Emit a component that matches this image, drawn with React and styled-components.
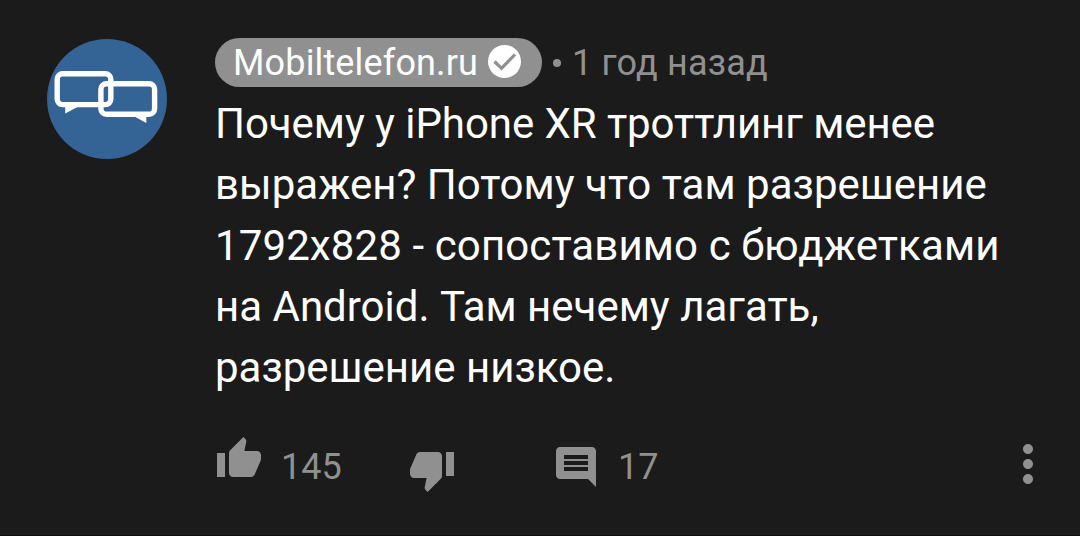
import React from "react";
import styled, { createGlobalStyle } from "styled-components";

const GlobalStyle = createGlobalStyle`
  * { box-sizing: border-box; }
  body {
    margin: 0;
    background: #1b1b1b;
    font-family: Roboto, "Liberation Sans", sans-serif;
  }
`;

const Comment = styled.article`
  display: flex;
  gap: 48px;
  width: 1080px;
  height: 536px;
  padding: 38px 22px 0 47px;
  background: #1b1b1b;
  border-bottom: 1px solid #120c0f;
`;

const Avatar = styled.svg`
  flex: none;
  width: 120px;
  height: 120px;
  margin-top: 1px;
`;

const Body = styled.div`
  flex: 1;
  min-width: 0;
`;

const Header = styled.header`
  display: flex;
  align-items: center;
  height: 49px;
`;

const AuthorPill = styled.div`
  display: flex;
  align-items: center;
  flex: none;
  width: 327px;
  height: 49px;
  padding-left: 18px;
  border-radius: 25px;
  background: #909090;
`;

const AuthorName = styled.span`
  width: 255px;
  font-size: 36px;
  line-height: 48px;
  letter-spacing: 0.15px;
  white-space: nowrap;
  color: #fff;
`;

const Badge = styled.svg`
  flex: none;
  width: 33px;
  height: 33px;
  margin-top: -2px;
`;

const Dot = styled.span`
  width: 8px;
  height: 8px;
  margin: 0 11px;
  border-radius: 50%;
  background: #909090;
`;

const Age = styled.span`
  font-size: 36px;
  line-height: 48px;
  letter-spacing: 0.2px;
  white-space: nowrap;
  color: #909090;
`;

const Text = styled.p`
  margin: 6px 0 0;
  font-size: 42px;
  line-height: 61px;
  color: #fff;
`;

const Line = styled.span`
  display: block;
  white-space: nowrap;
  letter-spacing: ${(p) => p.$spacing || 0}px;
`;

const Actions = styled.footer`
  display: flex;
  height: 60px;
  margin-top: 36px;
  color: #909090;
`;

const Icon = styled.svg`
  flex: none;
  width: ${(p) => p.$size || 48}px;
  height: ${(p) => p.$size || 48}px;
  margin-top: ${(p) => p.$drop || 0}px;
  fill: currentColor;
`;

const Count = styled.span`
  width: ${(p) => p.$width}px;
  margin-top: 9px;
  padding-left: 18px;
  font-size: 36px;
  line-height: 48px;
`;

const Spacer = styled.span`
  width: 96px;
`;

const Menu = styled(Icon)`
  margin-left: auto;
`;

const lines = [
  { text: "Почему у iPhone XR троттлинг менее", spacing: -0.06 },
  { text: "выражен? Потому что там разрешение", spacing: 0.02 },
  { text: "1792x828 - сопоставимо с бюджетками", spacing: 0.11 },
  { text: "на Android. Там нечему лагать,", spacing: 0 },
  { text: "разрешение низкое.", spacing: 0 },
];

export default function App() {
  return (
    <>
      <GlobalStyle />
      <Comment>
        <Avatar viewBox="0 0 120 120">
          <circle cx="60" cy="60" r="60" fill="#346395" />
          <g fill="none" stroke="#fff" strokeWidth="5.4">
            <rect x="10.2" y="34.8" width="53.6" height="30.8" rx="5.5" />
            <rect x="53.9" y="44.7" width="53.7" height="30.6" rx="5.5" />
          </g>
          <path d="M18.200 66v8.500L31.500 67.500zM86.500 77l12.800 7v-8z" fill="#fff" />
        </Avatar>
        <Body>
          <Header>
            <AuthorPill>
              <AuthorName>Mobiltelefon.ru</AuthorName>
              <Badge viewBox="0 0 33 33">
                <circle cx="16.500" cy="16.500" r="16.500" fill="#fff" />
                <path d="M6.500 16.500l7 6.800L27 9.500" fill="none" stroke="#909090" strokeWidth="3.200" />
              </Badge>
            </AuthorPill>
            <Dot />
            <Age>1 год назад</Age>
          </Header>
          <Text>
            {lines.map(({ text, spacing }) => (
              <Line key={text} $spacing={spacing}>{text}</Line>
            ))}
          </Text>
          <Actions>
            <Icon viewBox="0 0 24 24" $drop={1}>
              <path d="M1 21h4V9H1v12zm22-11c0-1.100-.9-2-2-2h-6.310l.950-4.570.030-.320c0-.410-.170-.790-.440-1.060L14.170 1 7.590 7.590C7.220 7.950 7 8.450 7 9v10c0 1.100.9 2 2 2h9c.830 0 1.540-.5 1.840-1.220l3.020-7.050c.090-.230.140-.470.140-.730v-2z" />
            </Icon>
            <Count $width={145}>145</Count>
            <Icon viewBox="0 0 24 24" $drop={12}>
              <path d="M15 3H6c-.830 0-1.540.5-1.840 1.220l-3.020 7.050c-.090.230-.140.470-.140.730v2c0 1.100.9 2 2 2h6.310l-.950 4.570-.030.320c0 .410.170.790.440 1.060L9.830 23l6.590-6.590c.360-.360.580-.860.580-1.410V5c0-1.100-.9-2-2-2zm4 0v12h4V3h-4z" />
            </Icon>
            <Spacer />
            <Icon viewBox="0 0 24 24" $drop={9}>
              <path d="M21.990 4c0-1.100-.890-2-1.990-2H4c-1.100 0-2 .9-2 2v12c0 1.100.9 2 2 2h14l4 4-.010-18zM18 14H6v-2h12v2zm0-3H6V9h12v2zm0-3H6V6h12v2z" />
            </Icon>
            <Count $width={90}>17</Count>
            <Menu viewBox="0 0 24 24" $size={60}>
              <path d="M12 8c1.100 0 2-.9 2-2s-.9-2-2-2-2 .9-2 2 .9 2 2 2zm0 2c-1.100 0-2 .9-2 2s.9 2 2 2 2-.9 2-2-.9-2-2-2zm0 6c-1.100 0-2 .9-2 2s.9 2 2 2 2-.9 2-2-.9-2-2-2z" />
            </Menu>
          </Actions>
        </Body>
      </Comment>
    </>
  );
}
